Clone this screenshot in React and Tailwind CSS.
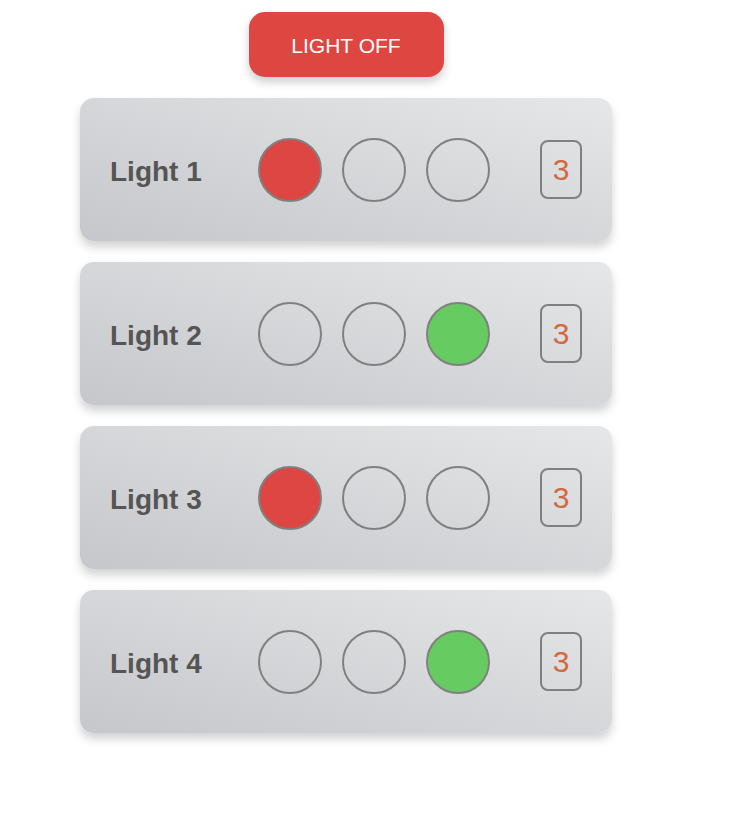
const lights = [
  { name: 'Light 1', on: 'red', count: 3 },
  { name: 'Light 2', on: 'green', count: 3 },
  { name: 'Light 3', on: 'red', count: 3 },
  { name: 'Light 4', on: 'green', count: 3 },
];

const Lamp = ({ color }) => (
  <div
    className={`w-16 h-16 rounded-full border-2 border-[#808080] ${
      color === 'red' ? 'bg-[#de4643]' : color === 'green' ? 'bg-[#66cc62]' : 'bg-transparent'
    }`}
  />
);

const LightCard = ({ light }) => (
  <div className="w-[532px] h-[143px] rounded-[14px] bg-gradient-to-tr from-[#c6c7ca] to-[#e6e7e9] shadow-[0_6px_10px_rgba(0,0,0,0.18)] flex items-center pl-[30px] pr-[30px]">
    <div className="w-[148px] pt-[5px] text-[28px] font-bold text-[#555555] leading-none">{light.name}</div>
    <div className="flex gap-5">
      <Lamp color={light.on === 'red' ? 'red' : null} />
      <Lamp color={null} />
      <Lamp color={light.on === 'green' ? 'green' : null} />
    </div>
    <div className="ml-[50px] w-[42px] h-[59px] rounded-lg border-2 border-[#808080] flex items-center justify-center text-[30px] text-[#d2683d]">
      {light.count}
    </div>
  </div>
);

export default function App() {
  return (
    <div className="w-[734px] h-[814px] bg-white pl-[80px] pt-[12px] font-['Liberation_Sans',Arial,sans-serif]">
      <div className="w-[532px] flex flex-col items-center gap-[21px]">
        <button className="w-[195px] h-[65px] pt-[2px] rounded-2xl bg-[#de4642] text-white text-[21px] shadow-[0_5px_10px_rgba(0,0,0,0.2)]">
          LIGHT OFF
        </button>
        {lights.map((l) => (
          <LightCard key={l.name} light={l} />
        ))}
      </div>
    </div>
  );
}
